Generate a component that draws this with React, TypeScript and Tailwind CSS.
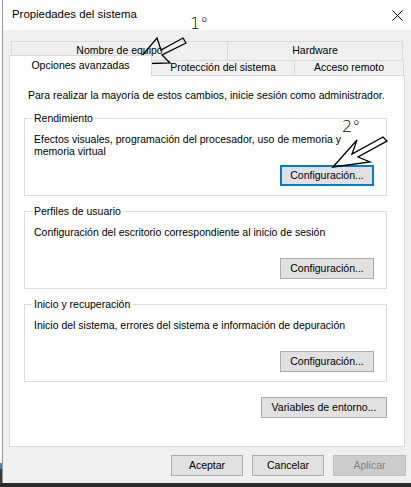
import React from "react";

const Btn = ({ label, w, focus, disabled }: { label: string; w: string; focus?: boolean; disabled?: boolean }) => (
  <div
    className={`${w} h-[21px] flex items-center justify-center ${
      focus
        ? "border-2 border-[#0078d7] bg-[#e1e1e1]"
        : disabled
        ? "border border-[#bfbfbf] bg-[#cccccc] text-[#838383]"
        : "border border-[#adadad] bg-[#e1e1e1]"
    }`}
  >
    {label}
  </div>
);

const Group = ({ title, text, focus }: { title: string; text: React.ReactNode; focus?: boolean }) => (
  <fieldset className="h-[84px] w-[363px] border border-[#dcdcdc] px-0 pb-0">
    <legend className="ml-[7px] px-[2px] leading-[12px]">{title}</legend>
    <div className="pl-[9px] pt-[9px] h-[33px] leading-[12px]">{text}</div>
    <div className="flex justify-end pr-[12px] mt-[8px]">
      <Btn label="Configuración..." w="w-[94px]" focus={focus} />
    </div>
  </fieldset>
);

export default function App() {
  return (
    <div className="relative w-[411px] h-[487px] overflow-hidden flex flex-col bg-[#f0f0f0] text-black text-[10.5px] font-['Liberation_Sans',Arial,sans-serif]">
      <div className="flex h-[483px]">
        <div className="w-[3px] flex flex-col border-r border-[#9a9a9a]">
          <div className="flex-1 bg-white" />
          <div className="h-[6px] bg-[#4a7fae]" />
          <div className="h-[14px] bg-[#3a3a3a]" />
        </div>
        <div className="w-[408px] flex flex-col">
          <div className="h-[30px] bg-white flex items-center justify-between pl-[9px] pr-[8px]">
            <span className="text-[11.4px]">Propiedades del sistema</span>
            <svg width="11" height="11" viewBox="0 0 11 11">
              <path d="M0.5 0.5 L10.5 10.5 M10.5 0.5 L0.5 10.5" stroke="#000" strokeWidth="1" />
            </svg>
          </div>

          <div className="mt-[11px] ml-[8px] flex h-[19px]">
            <div className="w-[217px] border-l border-t border-r border-[#d9d9d9] flex items-center justify-center">Nombre de equipo</div>
            <div className="w-[175px] border-t border-r border-[#d9d9d9] flex items-center justify-center">Hardware</div>
          </div>
          <div className="ml-[6px] flex items-end h-[15px]">
            <div className="relative z-10 -mb-px w-[143px] h-[21px] bg-white border-l border-t border-r border-[#d9d9d9] flex items-center justify-center">Opciones avanzadas</div>
            <div className="w-[143px] h-[15px] border-t border-r border-[#d9d9d9] flex items-center justify-center">Protección del sistema</div>
            <div className="w-[109px] h-[15px] border-t border-r border-[#d9d9d9] flex items-center justify-center">Acceso remoto</div>
          </div>

          <div className="ml-[6px] w-[396px] h-[372px] bg-white border border-[#d9d9d9] flex flex-col pl-[14px] pt-[13px]">
            <div className="pl-[4px] leading-[12px]">Para realizar la mayoría de estos cambios, inicie sesión como administrador.</div>
            <div className="mt-[11px] flex flex-col gap-[9px]">
              <Group
                title="Rendimiento"
                focus
                text={
                  <>
                    Efectos visuales, programación del procesador, uso de memoria y
                    <br />
                    memoria virtual
                  </>
                }
              />
              <Group title="Perfiles de usuario" text="Configuración del escritorio correspondiente al inicio de sesión" />
              <Group title="Inicio y recuperación" text="Inicio del sistema, errores del sistema e información de depuración" />
            </div>
            <div className="flex justify-end w-[363px] mt-[15px]">
              <Btn label="Variables de entorno..." w="w-[126px]" />
            </div>
          </div>

          <div className="mt-[8px] flex justify-end gap-[9px] pr-[5px]">
            <Btn label="Aceptar" w="w-[72px]" />
            <Btn label="Cancelar" w="w-[72px]" />
            <Btn label="Aplicar" w="w-[73px]" disabled />
          </div>
        </div>
      </div>
      <div className="h-[4px] bg-[#2b2b2b]" />

      <svg className="absolute inset-0 pointer-events-none" width="411" height="487" viewBox="0 0 411 487">
        <polygon
          points="135,64 157,38 161,50 183,38 186,43 162,55 170,63"
          fill="none"
          stroke="#000"
          strokeWidth="1.3"
          strokeLinejoin="miter"
        />
        <polygon
          points="333,167 357,140 352,154 383,137 387,141 358,157 370,162"
          fill="none"
          stroke="#000"
          strokeWidth="1.3"
          strokeLinejoin="miter"
        />
      </svg>
      <div className="absolute left-[190px] top-[15px] text-[16px] leading-[18px] font-['DejaVu_Sans',sans-serif] font-light">1°</div>
      <div className="absolute left-[342px] top-[118px] text-[16px] leading-[18px] font-['DejaVu_Sans',sans-serif] font-light">2°</div>
    </div>
  );
}
